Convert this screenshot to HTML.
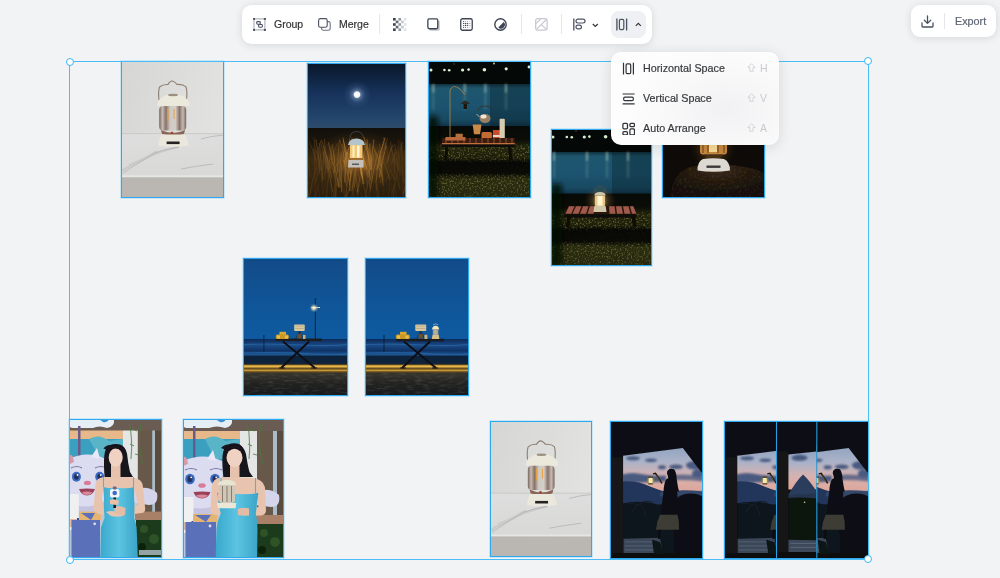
<!DOCTYPE html>
<html><head><meta charset="utf-8">
<style>
*{margin:0;padding:0;box-sizing:border-box}
html,body{width:1000px;height:578px;overflow:hidden;background:#f2f3f5;font-family:"Liberation Sans",sans-serif}
.abs{position:absolute}
.ph{position:absolute;overflow:hidden;outline:1px solid #2ea8ee;outline-offset:-1px;box-shadow:0 0 0 0.7px rgba(110,200,250,0.45)}
.ph svg{display:block;width:100%;height:100%}
#toolbar{left:242px;top:5px;width:410px;height:39px;background:#fff;border-radius:9.5px;box-shadow:0 1px 8px rgba(0,0,0,0.12)}
#export{left:911px;top:5px;width:85px;height:32px;background:#fff;border-radius:9px;box-shadow:0 1px 8px rgba(0,0,0,0.12)}
.t{position:absolute;font-size:10.5px;color:#333;line-height:12px;white-space:nowrap;will-change:transform;-webkit-text-stroke:0.2px currentColor}
.sep{position:absolute;width:1px;background:#e6e7ea}
#menu{left:611px;top:52px;width:168px;height:93px;background:radial-gradient(ellipse 60% 70% at 68% 62%,#f1f1f3 0%,#f8f8f9 55%,#fdfdfd 100%);border-radius:10px;box-shadow:0 2px 14px rgba(0,0,0,0.12)}
.mi{position:absolute;font-size:10.75px;color:#383a3e;line-height:12px;white-space:nowrap;will-change:transform;-webkit-text-stroke:0.2px currentColor}
.sc{position:absolute;font-size:10.5px;color:#c9cace;line-height:12px;will-change:transform}
.sel-line{position:absolute;background:#4cbcf8}
.handle{position:absolute;width:8px;height:8px;border-radius:50%;background:#fff;border:1.3px solid #3db6f6}
</style></head><body>

<!-- photos -->
<div class="ph" id="p1" style="left:121px;top:61px;width:103px;height:137px;background:#d6d6d4"><svg viewBox="0 0 103 137" preserveAspectRatio="none">
<defs>
<linearGradient id="w1" x1="0" y1="0" x2="1" y2="0.3"><stop offset="0" stop-color="#d6d6d4"/><stop offset="0.6" stop-color="#dddddb"/><stop offset="1" stop-color="#e2e2e0"/></linearGradient>
<linearGradient id="t1" x1="0" y1="0" x2="0" y2="1"><stop offset="0" stop-color="#dedede"/><stop offset="1" stop-color="#d8d8d6"/></linearGradient>
<linearGradient id="gl1" x1="0" y1="0" x2="1" y2="0"><stop offset="0" stop-color="#7a6458"/><stop offset="0.12" stop-color="#c4bcb6"/><stop offset="0.25" stop-color="#8a7266"/><stop offset="0.4" stop-color="#cfc9c4"/><stop offset="0.6" stop-color="#d4cec8"/><stop offset="0.75" stop-color="#8a7266"/><stop offset="0.88" stop-color="#c4bcb6"/><stop offset="1" stop-color="#7a6458"/></linearGradient>
<filter id="bl1" x="-5%" y="-5%" width="110%" height="110%"><feGaussianBlur stdDeviation="0.5"/></filter>
</defs>
<rect width="103" height="137" fill="url(#w1)"/>
<rect y="72.7" width="103" height="43" fill="url(#t1)"/>
<path d="M0 72.7 H103" stroke="#c4c4c2" stroke-width="0.8"/>
<g filter="url(#bl1)">
<path d="M0 110 Q18 100 34 93 Q44 89 58 86 M8 104 Q24 98 36 90" fill="none" stroke="#b0aeb0" stroke-width="2.2" opacity="0.35"/><path d="M2 112 Q20 100 34 92 Q44 88 58 86 M60 108 Q75 105 92 103 M80 78 Q90 75 103 74" fill="none" stroke="#a8a6a8" stroke-width="0.6"/>
<rect y="114.3" width="103" height="2" fill="#e6e6e4"/>
<rect y="116.3" width="103" height="21" fill="#bab7b2"/>
<path d="M38 39 Q37 31 38.5 26 Q42 23 47 23.5 Q49 20 51 20 Q53 20 56 23.5 Q62 23 65 25.8 Q66.5 31 65.5 39" fill="none" stroke="#8d7e72" stroke-width="1.1"/>
<path d="M36 45 Q37 34 52 33 Q68 34 69 45 Z" fill="#ebe9dc"/>
<ellipse cx="52" cy="34" rx="5" ry="1.2" fill="#9c8f80"/>
<rect x="38.2" y="45" width="27" height="24.5" rx="4" fill="url(#gl1)"/>
<path d="M47 48 V60 M53 48 V58" stroke="#e8a040" stroke-width="1"/>
<path d="M40 69 Q52 75 64 69 L63 73 Q52 76 41 73 Z" fill="#8a6658"/>
<circle cx="51" cy="72" r="1.5" fill="#a04a30"/>
<path d="M40 73.5 H64 Q67 80 68 84.5 Q52 87 37 84.5 Q38 79 40 73.5 Z" fill="#eae8dc"/>
<rect x="45.6" y="80.5" width="13" height="2.6" fill="#222"/>
</g>
</svg></div>
<div class="ph" id="p2" style="left:307px;top:63px;width:99px;height:135px;background:#1b2a3c"><svg viewBox="0 0 99 135" preserveAspectRatio="none">
<defs>
<linearGradient id="s2" x1="0" y1="0" x2="0" y2="1"><stop offset="0" stop-color="#091628"/><stop offset="0.45" stop-color="#16325a"/><stop offset="0.85" stop-color="#24466c"/><stop offset="1" stop-color="#2e4c6a"/></linearGradient>
<radialGradient id="m2"><stop offset="0" stop-color="#ffffff"/><stop offset="0.2" stop-color="#f0f4f8"/><stop offset="0.28" stop-color="#90a8c8" stop-opacity="0.55"/><stop offset="0.6" stop-color="#4a6a98" stop-opacity="0.25"/><stop offset="1" stop-color="#3a5a88" stop-opacity="0"/></radialGradient>
<linearGradient id="g2" x1="0" y1="0" x2="0" y2="1"><stop offset="0" stop-color="#12100c"/><stop offset="0.2" stop-color="#1a140c"/><stop offset="0.45" stop-color="#3a2a12"/><stop offset="1" stop-color="#2a1e0e"/></linearGradient>
<radialGradient id="gw2" cx="0.5" cy="0.5" r="0.5"><stop offset="0" stop-color="#d89040" stop-opacity="0.7"/><stop offset="0.5" stop-color="#8a5a20" stop-opacity="0.35"/><stop offset="1" stop-color="#4a3010" stop-opacity="0"/></radialGradient>
<filter id="bl2" x="-10%" y="-10%" width="120%" height="120%"><feGaussianBlur stdDeviation="0.45"/></filter>
</defs>
<rect width="99" height="65.5" fill="url(#s2)"/>
<circle cx="50" cy="31.6" r="14" fill="url(#m2)"/>
<rect y="65" width="99" height="70" fill="url(#g2)"/>
<ellipse cx="50" cy="98" rx="48" ry="32" fill="url(#gw2)"/>
<g fill="none" filter="url(#bl2)"><path d="M20.7 99.6 Q18.9 88.1 14.5 76.6" stroke="#724e1f" stroke-width="0.65" opacity="0.82"/><path d="M82.2 129.4 Q82.4 120.3 82.9 111.2" stroke="#483013" stroke-width="0.54" opacity="0.49"/><path d="M18.4 136.7 Q20.0 119.1 23.9 101.5" stroke="#5a3d18" stroke-width="0.55" opacity="0.57"/><path d="M63.3 127.9 Q65.4 110.0 70.2 92.0" stroke="#875d25" stroke-width="0.75" opacity="0.72"/><path d="M50.1 103.0 Q47.9 90.4 42.8 77.7" stroke="#d7963c" stroke-width="0.88" opacity="0.67"/><path d="M27.7 135.9 Q29.8 121.9 34.6 107.9" stroke="#5f411a" stroke-width="0.70" opacity="0.62"/><path d="M60.3 114.4 Q59.2 106.1 56.8 97.9" stroke="#b57e32" stroke-width="0.47" opacity="0.47"/><path d="M63.3 107.6 Q63.1 94.1 62.8 80.7" stroke="#b77f33" stroke-width="0.95" opacity="0.53"/><path d="M40.0 104.1 Q38.8 89.3 36.0 74.4" stroke="#b98133" stroke-width="0.82" opacity="0.58"/><path d="M55.9 135.7 Q53.5 128.3 48.0 120.9" stroke="#462f13" stroke-width="0.83" opacity="0.70"/><path d="M20.9 109.9 Q20.7 101.4 20.1 92.9" stroke="#724e1f" stroke-width="0.80" opacity="0.81"/><path d="M99.1 128.1 Q96.5 108.6 90.4 89.2" stroke="#483113" stroke-width="0.93" opacity="0.76"/><path d="M39.7 137.4 Q41.5 122.8 45.5 108.1" stroke="#593c18" stroke-width="0.55" opacity="0.63"/><path d="M9.9 112.2 Q9.0 93.1 6.8 74.1" stroke="#513615" stroke-width="0.53" opacity="0.76"/><path d="M34.5 108.1 Q37.1 100.7 43.2 93.3" stroke="#ac772f" stroke-width="0.55" opacity="0.47"/><path d="M1.0 102.6 Q-0.9 88.5 -5.3 74.3" stroke="#4f3615" stroke-width="0.57" opacity="0.85"/><path d="M8.3 118.8 Q7.8 102.0 6.7 85.1" stroke="#68471c" stroke-width="0.69" opacity="0.55"/><path d="M39.8 96.7 Q38.4 88.9 35.2 81.1" stroke="#c88b37" stroke-width="0.70" opacity="0.46"/><path d="M22.7 105.9 Q21.3 97.0 17.9 88.1" stroke="#996a2a" stroke-width="0.52" opacity="0.47"/><path d="M96.2 120.4 Q95.6 100.6 94.4 80.7" stroke="#5d4019" stroke-width="0.78" opacity="0.77"/><path d="M76.2 117.2 Q74.6 109.9 71.0 102.6" stroke="#845b24" stroke-width="0.90" opacity="0.82"/><path d="M31.7 124.6 Q32.5 107.4 34.3 90.2" stroke="#9e6e2c" stroke-width="0.71" opacity="0.71"/><path d="M69.8 107.1 Q72.2 90.8 78.0 74.6" stroke="#b47d32" stroke-width="0.93" opacity="0.72"/><path d="M-0.1 135.5 Q2.4 127.7 8.3 119.9" stroke="#553a17" stroke-width="0.48" opacity="0.52"/><path d="M64.2 120.6 Q66.5 104.2 71.9 87.7" stroke="#9f6e2c" stroke-width="0.45" opacity="0.82"/><path d="M-3.6 134.4 Q-1.9 126.8 2.0 119.2" stroke="#593d18" stroke-width="0.89" opacity="0.67"/><path d="M90.8 104.1 Q89.9 92.6 87.7 81.1" stroke="#67461c" stroke-width="0.69" opacity="0.66"/><path d="M-2.1 96.5 Q-2.2 88.7 -2.3 80.9" stroke="#533816" stroke-width="0.52" opacity="0.60"/><path d="M78.7 118.5 Q80.5 112.4 84.7 106.2" stroke="#745020" stroke-width="0.49" opacity="0.67"/><path d="M36.5 130.4 Q35.1 120.1 31.8 109.7" stroke="#68471c" stroke-width="0.93" opacity="0.49"/><path d="M7.5 122.9 Q7.5 104.5 7.7 86.2" stroke="#4f3515" stroke-width="0.88" opacity="0.76"/><path d="M2.3 134.7 Q1.2 125.9 -1.3 117.2" stroke="#5b3e18" stroke-width="0.66" opacity="0.77"/><path d="M13.2 134.3 Q11.4 125.9 6.9 117.4" stroke="#4f3615" stroke-width="0.62" opacity="0.67"/><path d="M93.5 127.0 Q92.5 120.9 90.2 114.8" stroke="#513716" stroke-width="0.69" opacity="0.74"/><path d="M47.8 98.4 Q49.7 89.0 54.0 79.5" stroke="#c88b37" stroke-width="0.83" opacity="0.84"/><path d="M63.3 125.5 Q62.3 110.9 59.9 96.4" stroke="#9f6e2c" stroke-width="0.68" opacity="0.81"/><path d="M28.3 134.0 Q28.9 117.0 30.3 100.0" stroke="#66461c" stroke-width="0.52" opacity="0.76"/><path d="M34.5 124.8 Q32.2 116.9 27.0 109.1" stroke="#68471c" stroke-width="0.85" opacity="0.52"/><path d="M93.3 111.7 Q92.5 97.7 90.6 83.6" stroke="#593c18" stroke-width="0.50" opacity="0.61"/><path d="M97.0 103.1 Q96.1 89.7 93.9 76.4" stroke="#3f2a11" stroke-width="0.46" opacity="0.83"/><path d="M85.4 131.0 Q87.9 113.7 93.6 96.4" stroke="#473013" stroke-width="0.74" opacity="0.65"/><path d="M57.6 137.2 Q60.1 120.6 66.0 103.9" stroke="#5f411a" stroke-width="0.78" opacity="0.72"/><path d="M76.2 122.8 Q75.2 105.2 72.7 87.5" stroke="#926528" stroke-width="0.65" opacity="0.69"/><path d="M92.8 126.7 Q91.3 116.3 87.9 106.0" stroke="#4a3214" stroke-width="0.76" opacity="0.85"/><path d="M93.0 113.0 Q94.7 101.4 98.7 89.8" stroke="#4c3314" stroke-width="0.66" opacity="0.46"/><path d="M15.0 119.3 Q15.7 103.6 17.1 87.9" stroke="#67461c" stroke-width="0.93" opacity="0.70"/><path d="M12.0 98.0 Q14.6 89.7 20.8 81.4" stroke="#69481c" stroke-width="0.61" opacity="0.49"/><path d="M23.1 105.0 Q25.2 92.6 30.2 80.2" stroke="#815923" stroke-width="0.57" opacity="0.57"/><path d="M98.3 102.3 Q99.3 90.4 101.6 78.4" stroke="#5f411a" stroke-width="0.58" opacity="0.66"/><path d="M12.2 99.4 Q11.2 92.9 8.9 86.5" stroke="#5b3e18" stroke-width="0.48" opacity="0.85"/><path d="M26.5 135.1 Q27.8 119.2 30.7 103.4" stroke="#61421a" stroke-width="0.93" opacity="0.80"/><path d="M73.4 120.2 Q74.6 104.5 77.4 88.8" stroke="#906327" stroke-width="0.70" opacity="0.51"/><path d="M87.0 116.8 Q85.2 109.8 81.1 102.9" stroke="#65451b" stroke-width="0.58" opacity="0.61"/><path d="M69.4 133.8 Q68.7 123.2 67.3 112.6" stroke="#503615" stroke-width="0.46" opacity="0.80"/><path d="M-2.9 138.2 Q-4.8 130.1 -9.1 121.9" stroke="#5c3e19" stroke-width="0.86" opacity="0.54"/><path d="M55.3 116.5 Q53.6 100.4 49.7 84.3" stroke="#d6953b" stroke-width="0.95" opacity="0.73"/><path d="M95.4 137.2 Q97.3 125.9 101.7 114.5" stroke="#5b3e18" stroke-width="0.74" opacity="0.49"/><path d="M62.5 136.0 Q63.3 125.8 65.1 115.5" stroke="#5d3f19" stroke-width="0.75" opacity="0.46"/><path d="M63.9 106.5 Q64.8 91.5 66.8 76.5" stroke="#c58937" stroke-width="0.76" opacity="0.59"/><path d="M85.9 135.1 Q88.0 116.6 92.8 98.1" stroke="#553a17" stroke-width="0.80" opacity="0.69"/><path d="M52.5 139.4 Q50.2 128.5 44.9 117.5" stroke="#573b17" stroke-width="0.70" opacity="0.67"/><path d="M60.2 106.2 Q57.9 97.4 52.5 88.6" stroke="#cf9039" stroke-width="0.90" opacity="0.73"/><path d="M7.7 139.0 Q7.8 121.5 7.9 103.9" stroke="#3f2a10" stroke-width="0.87" opacity="0.70"/><path d="M62.8 95.8 Q60.3 86.8 54.4 77.8" stroke="#a3712d" stroke-width="0.63" opacity="0.81"/><path d="M76.6 131.7 Q76.0 121.5 74.6 111.4" stroke="#533816" stroke-width="0.47" opacity="0.61"/><path d="M101.3 128.9 Q100.2 110.9 97.6 92.8" stroke="#563a17" stroke-width="0.84" opacity="0.73"/><path d="M42.7 102.9 Q44.8 96.6 49.6 90.4" stroke="#d7963c" stroke-width="0.59" opacity="0.75"/><path d="M39.4 123.2 Q38.4 105.5 36.2 87.7" stroke="#b07a31" stroke-width="0.58" opacity="0.65"/><path d="M-1.7 106.9 Q0.5 96.8 5.7 86.8" stroke="#432d12" stroke-width="0.83" opacity="0.48"/><path d="M102.5 102.5 Q101.0 95.2 97.3 87.9" stroke="#5e4019" stroke-width="0.78" opacity="0.81"/><path d="M49.4 100.1 Q49.2 89.4 48.6 78.6" stroke="#d7963c" stroke-width="0.53" opacity="0.55"/><path d="M86.9 100.1 Q85.8 89.3 83.3 78.5" stroke="#6e4b1e" stroke-width="0.90" opacity="0.48"/><path d="M87.3 103.1 Q84.7 91.6 78.8 80.1" stroke="#5e4019" stroke-width="0.55" opacity="0.46"/><path d="M30.4 109.8 Q30.9 93.3 32.3 76.9" stroke="#b77f33" stroke-width="0.54" opacity="0.54"/><path d="M99.2 137.8 Q101.8 122.2 107.8 106.7" stroke="#412b11" stroke-width="0.90" opacity="0.73"/><path d="M67.8 132.9 Q66.2 125.5 62.4 118.0" stroke="#432d12" stroke-width="0.69" opacity="0.67"/><path d="M53.9 111.3 Q55.8 94.9 60.0 78.5" stroke="#d7963c" stroke-width="0.47" opacity="0.51"/><path d="M18.9 105.7 Q17.2 91.7 13.4 77.7" stroke="#835a24" stroke-width="0.62" opacity="0.60"/><path d="M72.2 137.5 Q71.4 128.8 69.4 120.2" stroke="#60411a" stroke-width="0.56" opacity="0.46"/><path d="M15.8 132.1 Q18.2 115.9 23.7 99.7" stroke="#503615" stroke-width="0.47" opacity="0.57"/><path d="M73.4 112.7 Q72.7 104.7 71.2 96.8" stroke="#8c6126" stroke-width="0.63" opacity="0.63"/><path d="M9.9 96.3 Q11.1 86.8 14.0 77.3" stroke="#4e3415" stroke-width="0.60" opacity="0.67"/><path d="M92.5 116.7 Q92.7 97.0 93.0 77.4" stroke="#4d3414" stroke-width="0.76" opacity="0.69"/><path d="M60.3 127.6 Q60.0 121.3 59.2 115.0" stroke="#714d1f" stroke-width="0.52" opacity="0.47"/><path d="M14.9 107.9 Q13.9 95.8 11.6 83.7" stroke="#765120" stroke-width="0.54" opacity="0.59"/><path d="M68.7 119.5 Q71.0 100.1 76.5 80.7" stroke="#9e6d2b" stroke-width="0.62" opacity="0.67"/><path d="M54.3 111.5 Q52.7 93.4 48.8 75.3" stroke="#d7963c" stroke-width="0.51" opacity="0.80"/><path d="M59.9 139.4 Q61.1 131.4 63.7 123.4" stroke="#533816" stroke-width="0.48" opacity="0.78"/><path d="M90.3 98.6 Q91.8 88.7 95.4 78.8" stroke="#5e4019" stroke-width="0.58" opacity="0.47"/><path d="M46.8 134.0 Q46.7 125.0 46.3 116.1" stroke="#513716" stroke-width="0.80" opacity="0.83"/><path d="M91.8 108.0 Q89.1 96.1 82.8 84.3" stroke="#5c3e19" stroke-width="0.88" opacity="0.79"/><path d="M2.9 114.5 Q2.4 107.4 1.5 100.3" stroke="#5e4019" stroke-width="0.59" opacity="0.79"/><path d="M99.1 131.8 Q101.4 123.0 106.7 114.2" stroke="#5e4019" stroke-width="0.95" opacity="0.45"/><path d="M-4.6 108.1 Q-5.0 94.9 -6.0 81.6" stroke="#422c11" stroke-width="0.77" opacity="0.72"/><path d="M63.7 118.0 Q64.7 104.3 67.1 90.6" stroke="#9b6b2a" stroke-width="0.67" opacity="0.50"/><path d="M6.3 129.3 Q5.5 118.7 3.4 108.2" stroke="#483013" stroke-width="0.74" opacity="0.50"/><path d="M64.9 98.2 Q63.0 89.2 58.7 80.1" stroke="#b27b31" stroke-width="0.66" opacity="0.57"/><path d="M34.2 129.1 Q34.4 115.8 34.8 102.5" stroke="#6f4c1e" stroke-width="0.76" opacity="0.52"/><path d="M47.6 124.3 Q48.0 110.7 49.0 97.1" stroke="#a16f2c" stroke-width="0.55" opacity="0.83"/><path d="M69.5 127.7 Q69.3 108.3 68.7 88.9" stroke="#885e25" stroke-width="0.60" opacity="0.58"/><path d="M27.7 109.2 Q27.6 100.3 27.4 91.4" stroke="#936528" stroke-width="0.63" opacity="0.72"/><path d="M29.4 133.9 Q28.4 116.7 26.3 99.5" stroke="#775220" stroke-width="0.54" opacity="0.49"/><path d="M103.4 96.5 Q105.4 90.4 110.0 84.3" stroke="#3f2a10" stroke-width="0.78" opacity="0.67"/><path d="M19.3 106.0 Q18.7 91.0 17.4 75.9" stroke="#7d5622" stroke-width="0.82" opacity="0.57"/><path d="M4.7 130.6 Q2.3 123.2 -3.3 115.9" stroke="#3f2a10" stroke-width="0.95" opacity="0.62"/><path d="M75.4 120.1 Q74.5 100.4 72.5 80.8" stroke="#8a5f26" stroke-width="0.79" opacity="0.45"/><path d="M34.6 129.2 Q34.6 115.1 34.5 101.1" stroke="#8b6026" stroke-width="0.67" opacity="0.74"/><path d="M37.8 98.9 Q36.2 87.5 32.6 76.0" stroke="#a3712d" stroke-width="0.59" opacity="0.50"/><path d="M44.8 128.2 Q46.8 111.6 51.7 95.0" stroke="#926528" stroke-width="0.78" opacity="0.81"/><path d="M38.2 136.1 Q40.4 128.7 45.7 121.2" stroke="#5d3f19" stroke-width="0.94" opacity="0.78"/><path d="M72.5 114.6 Q74.5 98.5 79.3 82.5" stroke="#9e6d2b" stroke-width="0.76" opacity="0.82"/><path d="M26.0 110.1 Q28.1 103.6 32.8 97.1" stroke="#936528" stroke-width="0.79" opacity="0.55"/><path d="M15.1 116.5 Q14.3 98.3 12.5 80.0" stroke="#6f4c1e" stroke-width="0.66" opacity="0.79"/><path d="M8.5 134.0 Q9.6 127.8 12.1 121.6" stroke="#593c18" stroke-width="0.68" opacity="0.75"/><path d="M25.6 101.3 Q24.3 90.3 21.3 79.3" stroke="#9b6b2b" stroke-width="0.73" opacity="0.71"/><path d="M101.4 129.8 Q103.9 112.7 109.8 95.6" stroke="#5e4019" stroke-width="0.82" opacity="0.59"/><path d="M50.4 129.0 Q52.6 112.0 57.6 95.0" stroke="#a16f2c" stroke-width="0.78" opacity="0.55"/><path d="M62.8 103.4 Q61.0 88.8 56.9 74.1" stroke="#c58937" stroke-width="0.88" opacity="0.57"/><path d="M-0.1 131.8 Q-2.0 115.0 -6.3 98.2" stroke="#5a3d18" stroke-width="0.87" opacity="0.68"/><path d="M24.9 97.5 Q24.5 90.7 23.8 83.8" stroke="#996a2a" stroke-width="0.77" opacity="0.54"/><path d="M82.0 97.8 Q80.2 85.9 76.1 74.0" stroke="#6a481d" stroke-width="0.85" opacity="0.54"/><path d="M-3.5 116.7 Q-3.1 105.8 -2.1 94.9" stroke="#523816" stroke-width="0.80" opacity="0.82"/><path d="M31.9 123.6 Q30.5 115.9 27.4 108.3" stroke="#66461c" stroke-width="0.88" opacity="0.59"/><path d="M72.5 134.5 Q70.9 123.1 67.2 111.7" stroke="#473013" stroke-width="0.69" opacity="0.60"/><path d="M2.6 133.3 Q4.6 118.3 9.3 103.4" stroke="#5b3e19" stroke-width="0.81" opacity="0.78"/><path d="M71.7 114.3 Q74.0 96.8 79.2 79.3" stroke="#926528" stroke-width="0.52" opacity="0.52"/><path d="M44.7 133.9 Q46.6 120.5 51.1 107.1" stroke="#69481c" stroke-width="0.73" opacity="0.55"/><path d="M64.8 107.2 Q64.2 101.1 62.9 94.9" stroke="#b27c31" stroke-width="0.89" opacity="0.56"/><path d="M96.0 131.5 Q97.5 123.3 101.0 115.1" stroke="#5e4019" stroke-width="0.93" opacity="0.73"/><path d="M37.6 119.5 Q38.2 104.4 39.6 89.2" stroke="#a2702c" stroke-width="0.89" opacity="0.67"/><path d="M2.8 108.8 Q2.6 101.7 2.1 94.5" stroke="#422c11" stroke-width="0.71" opacity="0.56"/><path d="M85.2 129.6 Q86.8 121.0 90.8 112.3" stroke="#523816" stroke-width="0.58" opacity="0.81"/><path d="M-4.3 113.0 Q-6.1 98.6 -10.4 84.2" stroke="#4f3615" stroke-width="0.89" opacity="0.59"/><path d="M72.2 103.6 Q74.7 89.4 80.6 75.3" stroke="#a2712d" stroke-width="0.62" opacity="0.46"/><path d="M18.0 127.8 Q18.2 115.3 18.5 102.8" stroke="#4a3214" stroke-width="0.54" opacity="0.60"/><path d="M51.0 131.9 Q50.1 119.6 47.9 107.3" stroke="#815923" stroke-width="0.80" opacity="0.75"/><path d="M82.8 116.8 Q80.7 107.2 75.8 97.5" stroke="#714d1f" stroke-width="0.82" opacity="0.81"/><path d="M95.2 117.7 Q97.7 104.8 103.6 92.0" stroke="#422c11" stroke-width="0.64" opacity="0.67"/><path d="M60.6 122.5 Q60.6 114.3 60.7 106.1" stroke="#7b5522" stroke-width="0.64" opacity="0.52"/><path d="M29.9 123.2 Q28.1 111.6 23.9 100.0" stroke="#7f5823" stroke-width="0.78" opacity="0.57"/><path d="M24.6 114.6 Q22.1 98.9 16.3 83.1" stroke="#97692a" stroke-width="0.48" opacity="0.81"/><path d="M15.8 132.1 Q15.8 125.6 15.7 119.1" stroke="#473013" stroke-width="0.84" opacity="0.76"/><path d="M8.8 97.3 Q8.4 87.2 7.4 77.0" stroke="#533816" stroke-width="0.63" opacity="0.68"/><path d="M37.3 100.8 Q40.0 88.2 46.1 75.6" stroke="#bd8334" stroke-width="0.81" opacity="0.82"/><path d="M43.5 111.3 Q41.3 94.2 36.3 77.1" stroke="#d7963c" stroke-width="0.52" opacity="0.70"/><path d="M51.0 129.7 Q51.9 122.9 54.1 116.0" stroke="#6f4c1e" stroke-width="0.47" opacity="0.72"/><path d="M25.5 128.5 Q22.8 108.8 16.6 89.1" stroke="#7c5522" stroke-width="0.70" opacity="0.84"/><path d="M95.7 96.3 Q95.2 88.4 94.1 80.5" stroke="#5a3d18" stroke-width="0.84" opacity="0.67"/><path d="M95.4 131.9 Q96.2 113.6 97.8 95.3" stroke="#473013" stroke-width="0.82" opacity="0.74"/><path d="M96.1 102.7 Q95.3 96.4 93.3 90.1" stroke="#473013" stroke-width="0.64" opacity="0.47"/><path d="M61.5 114.2 Q59.4 104.5 54.4 94.8" stroke="#b07a31" stroke-width="0.50" opacity="0.79"/><path d="M25.2 135.4 Q24.6 127.7 23.2 119.9" stroke="#593d18" stroke-width="0.71" opacity="0.63"/><path d="M91.0 102.4 Q91.1 89.3 91.3 76.3" stroke="#563a17" stroke-width="0.59" opacity="0.70"/><path d="M43.0 118.3 Q45.0 103.2 49.5 88.1" stroke="#c38836" stroke-width="0.60" opacity="0.72"/><path d="M70.5 135.9 Q70.6 124.5 71.0 113.1" stroke="#583c18" stroke-width="0.62" opacity="0.58"/><path d="M62.7 111.8 Q61.9 93.9 59.9 76.1" stroke="#b57e32" stroke-width="0.75" opacity="0.69"/><path d="M102.9 137.4 Q102.7 125.5 102.0 113.6" stroke="#553917" stroke-width="0.70" opacity="0.69"/><path d="M38.7 133.7 Q40.3 115.2 44.0 96.7" stroke="#8a5f26" stroke-width="0.89" opacity="0.55"/><path d="M97.7 104.1 Q97.6 96.7 97.6 89.2" stroke="#442e12" stroke-width="0.58" opacity="0.69"/><path d="M11.2 112.9 Q13.6 101.8 19.2 90.6" stroke="#533816" stroke-width="0.70" opacity="0.64"/><path d="M12.7 110.6 Q11.9 99.5 10.1 88.4" stroke="#6a491d" stroke-width="0.73" opacity="0.64"/><path d="M43.0 122.4 Q41.0 109.6 36.3 96.8" stroke="#a5722d" stroke-width="0.65" opacity="0.79"/><path d="M9.4 119.6 Q10.1 109.4 11.8 99.2" stroke="#5a3d18" stroke-width="0.77" opacity="0.68"/><path d="M96.5 105.2 Q96.2 92.1 95.4 79.1" stroke="#432d12" stroke-width="0.47" opacity="0.51"/><path d="M54.2 105.8 Q52.3 92.6 48.0 79.3" stroke="#d7963c" stroke-width="0.80" opacity="0.82"/><path d="M84.8 133.6 Q84.8 127.0 85.0 120.5" stroke="#493113" stroke-width="0.67" opacity="0.74"/><path d="M74.7 104.2 Q72.4 95.8 66.9 87.4" stroke="#9e6d2b" stroke-width="0.86" opacity="0.49"/><path d="M9.9 101.2 Q7.6 89.9 2.2 78.6" stroke="#6b491d" stroke-width="0.54" opacity="0.72"/><path d="M32.0 123.9 Q30.1 111.3 25.7 98.7" stroke="#946629" stroke-width="0.70" opacity="0.84"/><path d="M59.9 138.2 Q57.5 123.0 51.9 107.8" stroke="#4e3515" stroke-width="0.95" opacity="0.72"/><path d="M81.3 132.7 Q82.4 121.7 85.0 110.6" stroke="#553917" stroke-width="0.48" opacity="0.67"/><path d="M96.4 120.0 Q94.0 103.0 88.6 86.0" stroke="#4d3414" stroke-width="0.70" opacity="0.67"/><path d="M87.2 117.1 Q87.3 103.1 87.6 89.2" stroke="#6a491d" stroke-width="0.74" opacity="0.61"/><path d="M26.1 133.9 Q27.3 122.9 30.0 111.9" stroke="#483013" stroke-width="0.94" opacity="0.54"/><path d="M40.8 111.6 Q42.0 93.3 44.9 75.0" stroke="#c28736" stroke-width="0.57" opacity="0.75"/><path d="M43.7 103.1 Q44.9 95.5 47.7 87.8" stroke="#d7963c" stroke-width="0.85" opacity="0.48"/><path d="M47.4 101.5 Q45.9 88.7 42.5 75.8" stroke="#cd8f39" stroke-width="0.53" opacity="0.77"/><path d="M13.2 107.0 Q11.9 91.7 8.9 76.4" stroke="#745020" stroke-width="0.73" opacity="0.77"/><path d="M89.7 138.3 Q89.1 131.1 87.8 123.9" stroke="#4e3515" stroke-width="0.59" opacity="0.80"/><path d="M38.0 136.7 Q37.7 129.8 37.0 122.8" stroke="#543916" stroke-width="0.84" opacity="0.64"/><path d="M93.0 108.4 Q91.4 97.4 87.5 86.4" stroke="#4b3314" stroke-width="0.69" opacity="0.74"/><path d="M16.0 117.0 Q18.6 104.9 24.7 92.8" stroke="#6c4a1d" stroke-width="0.85" opacity="0.54"/><path d="M92.5 96.1 Q93.3 87.9 95.0 79.8" stroke="#553a17" stroke-width="0.71" opacity="0.70"/><path d="M32.9 124.8 Q33.4 113.2 34.4 101.7" stroke="#885e25" stroke-width="0.60" opacity="0.75"/><path d="M84.9 139.5 Q84.5 132.6 83.6 125.7" stroke="#442e12" stroke-width="0.53" opacity="0.64"/><path d="M79.8 100.6 Q81.7 91.2 86.0 81.7" stroke="#8b6026" stroke-width="0.55" opacity="0.74"/><path d="M57.6 107.3 Q56.7 94.0 54.6 80.7" stroke="#d7963c" stroke-width="0.65" opacity="0.50"/><path d="M83.9 102.1 Q86.0 94.4 90.7 86.7" stroke="#6d4a1d" stroke-width="0.58" opacity="0.61"/><path d="M73.8 103.8 Q71.5 93.3 66.0 82.9" stroke="#906327" stroke-width="0.82" opacity="0.71"/><path d="M60.4 135.4 Q59.2 129.0 56.4 122.6" stroke="#543917" stroke-width="0.63" opacity="0.84"/><path d="M19.4 138.2 Q20.3 121.9 22.5 105.7" stroke="#5f4019" stroke-width="0.67" opacity="0.58"/><path d="M42.6 128.1 Q43.3 110.6 44.9 93.1" stroke="#a5722d" stroke-width="0.78" opacity="0.76"/><path d="M9.0 132.3 Q8.0 118.9 5.9 105.4" stroke="#432d12" stroke-width="0.75" opacity="0.54"/><path d="M34.4 119.6 Q33.0 110.7 29.6 101.7" stroke="#7f5823" stroke-width="0.62" opacity="0.78"/><path d="M21.6 107.0 Q22.2 99.1 23.5 91.2" stroke="#8f6327" stroke-width="0.54" opacity="0.78"/><path d="M-3.9 100.3 Q-2.3 92.9 1.3 85.6" stroke="#412c11" stroke-width="0.82" opacity="0.53"/><path d="M27.5 99.5 Q26.8 90.5 25.2 81.4" stroke="#a16f2c" stroke-width="0.73" opacity="0.63"/><path d="M56.3 121.1 Q54.8 101.5 51.3 82.0" stroke="#b98133" stroke-width="0.95" opacity="0.73"/><path d="M63.8 116.1 Q62.4 109.9 58.9 103.7" stroke="#9e6e2c" stroke-width="0.59" opacity="0.69"/><path d="M48.2 102.8 Q45.9 96.0 40.4 89.2" stroke="#d7963c" stroke-width="0.57" opacity="0.65"/></g>
<g filter="url(#bl2)">
<path d="M43 75 Q43 69 49.5 68.5 Q56 69 56.5 75" fill="none" stroke="#4a5060" stroke-width="0.7"/>
<path d="M41 82 Q42 75.5 49.5 75.5 Q57 75.5 58 82 Z" fill="#b4c4cc"/>
<rect x="43" y="82" width="12.4" height="13" fill="#f2c878"/>
<rect x="45.5" y="82.5" width="2" height="12" fill="#fff0c0"/><rect x="50" y="82.5" width="2.5" height="12" fill="#fff6d8"/>
<path d="M43 95 H55.4 L54 97 H44 Z" fill="#a07030"/>
<path d="M41.5 97 H56.5 L56.7 104.5 H41 Z" fill="#c4c0bc"/>
<rect x="45" y="100.5" width="7" height="1.5" fill="#5a5a5a"/>
</g>
</svg></div>
<div class="ph" id="p3" style="left:428px;top:61px;width:103px;height:137px;background:#0e1a1c"><svg viewBox="0 0 103 137" preserveAspectRatio="none">
<defs>
<linearGradient id="l3" x1="0" y1="0" x2="0" y2="1"><stop offset="0" stop-color="#10303e"/><stop offset="0.1" stop-color="#1e566e"/><stop offset="0.5" stop-color="#1c5470"/><stop offset="0.85" stop-color="#184a62"/><stop offset="1" stop-color="#10344a"/></linearGradient>
<linearGradient id="gr3" x1="0" y1="0" x2="0" y2="1"><stop offset="0" stop-color="#080a07"/><stop offset="0.18" stop-color="#0a0c07"/><stop offset="0.3" stop-color="#22240c"/><stop offset="0.45" stop-color="#1c1e0a"/><stop offset="0.5" stop-color="#070705"/><stop offset="0.66" stop-color="#0a0a06"/><stop offset="0.74" stop-color="#2a2c10"/><stop offset="1" stop-color="#24260e"/></linearGradient>
<filter id="bl3" x="-10%" y="-10%" width="120%" height="120%"><feGaussianBlur stdDeviation="0.5"/></filter>
<filter id="bb3" x="-50%" y="-20%" width="200%" height="140%"><feGaussianBlur stdDeviation="2.5"/></filter>
<filter id="sp3" x="0" y="0" width="100%" height="100%"><feTurbulence type="fractalNoise" baseFrequency="0.55" numOctaves="2" seed="3"/><feColorMatrix values="0 0 0 0 0.45  0 0 0 0 0.42  0 0 0 0 0.12  0 0 0 3.5 -1.75"/><feComposite in2="SourceGraphic" operator="in"/></filter>
<linearGradient id="mg3" x1="0" y1="80" x2="0" y2="137" gradientUnits="userSpaceOnUse"><stop offset="0" stop-color="#000"/><stop offset="0.12" stop-color="#fff"/><stop offset="0.3" stop-color="#fff"/><stop offset="0.38" stop-color="#222"/><stop offset="0.55" stop-color="#111"/><stop offset="0.64" stop-color="#fff"/><stop offset="0.85" stop-color="#ddd"/><stop offset="1" stop-color="#999"/></linearGradient></defs>
<rect width="103" height="137" fill="#040806"/>
<rect y="23" width="103" height="42" fill="url(#l3)"/><rect x="62" y="23" width="41" height="42" fill="#081c24" opacity="0.35"/>
<filter id="rf3" x="-100%" y="-20%" width="300%" height="140%"><feGaussianBlur stdDeviation="0.9"/></filter><g filter="url(#rf3)" fill="#c8dcc8"><rect x="4.3" y="23" width="2" height="9" opacity="0.55"/><rect x="4.3" y="33" width="2" height="16" opacity="0.18"/><rect x="35.8" y="23" width="2" height="9" opacity="0.55"/><rect x="35.8" y="33" width="2" height="16" opacity="0.18"/><rect x="56.4" y="23" width="2" height="9" opacity="0.55"/><rect x="56.4" y="33" width="2" height="16" opacity="0.18"/><rect x="77" y="23" width="2" height="9" opacity="0.55"/><rect x="77" y="33" width="2" height="16" opacity="0.18"/></g>
<g fill="#d8f0d0" filter="url(#bl3)">
<circle cx="3" cy="9" r="1.5"/><circle cx="16.4" cy="9" r="1.3"/><circle cx="21.2" cy="9.2" r="1.3"/><circle cx="34.6" cy="9" r="1.6"/><circle cx="40.6" cy="8.6" r="1.3"/><circle cx="56.4" cy="8.8" r="1.8"/><circle cx="78.2" cy="7.8" r="1.6"/><circle cx="101" cy="6" r="1.4"/>
<circle cx="26" cy="3" r="0.8" fill="#803030"/><circle cx="66" cy="2.5" r="1" fill="#c8c090"/>
</g>
<rect y="65" width="103" height="72" fill="url(#gr3)"/>
<mask id="mk3" maskUnits="userSpaceOnUse" x="0" y="80" width="103" height="57"><rect y="80" width="103" height="57" fill="url(#mg3)"/></mask><g mask="url(#mk3)"><rect y="80" width="103" height="57" fill="#fff" filter="url(#sp3)" opacity="0.45"/></g>
<g filter="url(#bl3)">
<path d="M22 77 V30 Q24 22 32 28 L37 34" fill="none" stroke="#a08048" stroke-width="0.9"/>
<path d="M32.7 43 Q37 36 42 43 Z" fill="#2a2a28"/><rect x="35.5" y="43" width="3.5" height="5" fill="#1a1410"/>
<path d="M50 50 Q50 45 57 45 Q64 45 64 50" fill="none" stroke="#3a3020" stroke-width="0.8"/>
<ellipse cx="57" cy="57.5" rx="5.5" ry="4.5" fill="#9a8064"/><ellipse cx="55.5" cy="55.5" rx="3" ry="2" fill="#f0e8d8"/><path d="M51.5 56 L48.5 53" stroke="#c8b090" stroke-width="1"/>
<path d="M44.7 63.4 H53.5 L52 73.2 H46 Z" fill="#c88a48"/>
<rect x="53.5" y="71" width="10.4" height="10.5" rx="1.5" fill="#c46a30"/>
<rect x="64.9" y="69" width="8.3" height="11.5" fill="#c84c2a"/><rect x="64.9" y="74" width="8.3" height="2" fill="#e8d8c8"/>
<rect x="71.6" y="57.7" width="5.2" height="22.8" rx="1" fill="#d8ccb0"/>
<rect x="27.6" y="72.7" width="7.2" height="3.7" fill="#b07040"/>
<rect x="14" y="77" width="72.7" height="6.5" fill="#3a1c10"/>
<path d="M18 77 V83.5 M24 77 V83.5 M30 77 V83.5 M36 77 V83.5 M42 77 V83.5 M48 77 V83.5 M54 77 V83.5 M60 77 V83.5 M66 77 V83.5 M72 77 V83.5 M78 77 V83.5 M84 77 V83.5" stroke="#9a5a38" stroke-width="1.1" opacity="0.8"/>
<rect x="14" y="82" width="72.7" height="1.5" fill="#c0703c"/>
<rect x="17.5" y="76" width="20" height="3.5" fill="#b8683a"/>
<rect x="14" y="83.5" width="72.7" height="2.5" fill="#100c08"/>
<path d="M19 86 L17.5 99 M81.5 86 L83 99" stroke="#0a0806" stroke-width="3"/>
</g>
<rect x="0" y="55" width="10" height="82" fill="#050705" filter="url(#bb3)" opacity="0.8"/>
</svg></div>
<div class="ph" id="p4" style="left:551px;top:129px;width:101px;height:137px;background:#0e1a1c"><svg viewBox="0 0 101 137" preserveAspectRatio="none">
<defs>
<linearGradient id="l4" x1="0" y1="0" x2="0" y2="1"><stop offset="0" stop-color="#10303e"/><stop offset="0.1" stop-color="#1e566e"/><stop offset="0.5" stop-color="#1c5470"/><stop offset="0.85" stop-color="#184a62"/><stop offset="1" stop-color="#10344a"/></linearGradient>
<linearGradient id="gr4" x1="0" y1="0" x2="0" y2="1"><stop offset="0" stop-color="#080a07"/><stop offset="0.18" stop-color="#0a0c07"/><stop offset="0.3" stop-color="#22240c"/><stop offset="0.45" stop-color="#1c1e0a"/><stop offset="0.5" stop-color="#070705"/><stop offset="0.66" stop-color="#0a0a06"/><stop offset="0.74" stop-color="#2a2c10"/><stop offset="1" stop-color="#24260e"/></linearGradient>
<radialGradient id="gw4"><stop offset="0" stop-color="#ffe6a8" stop-opacity="0.7"/><stop offset="0.5" stop-color="#c89a50" stop-opacity="0.25"/><stop offset="1" stop-color="#604020" stop-opacity="0"/></radialGradient>
<filter id="bl4" x="-10%" y="-10%" width="120%" height="120%"><feGaussianBlur stdDeviation="0.5"/></filter>
<filter id="bb4" x="-50%" y="-20%" width="200%" height="140%"><feGaussianBlur stdDeviation="2.5"/></filter>
<filter id="sp4" x="0" y="0" width="100%" height="100%"><feTurbulence type="fractalNoise" baseFrequency="0.55" numOctaves="2" seed="7"/><feColorMatrix values="0 0 0 0 0.45  0 0 0 0 0.42  0 0 0 0 0.12  0 0 0 3.5 -1.75"/><feComposite in2="SourceGraphic" operator="in"/></filter>
<linearGradient id="mg4" x1="0" y1="80" x2="0" y2="137" gradientUnits="userSpaceOnUse"><stop offset="0" stop-color="#000"/><stop offset="0.12" stop-color="#fff"/><stop offset="0.3" stop-color="#fff"/><stop offset="0.38" stop-color="#222"/><stop offset="0.55" stop-color="#111"/><stop offset="0.64" stop-color="#fff"/><stop offset="0.85" stop-color="#ddd"/><stop offset="1" stop-color="#999"/></linearGradient></defs>
<rect width="101" height="137" fill="#040806"/>
<rect y="23" width="101" height="42" fill="url(#l4)"/><rect x="61" y="23" width="40" height="42" fill="#081c24" opacity="0.35"/>
<filter id="rf4" x="-100%" y="-20%" width="300%" height="140%"><feGaussianBlur stdDeviation="0.9"/></filter><g filter="url(#rf4)" fill="#c8dcc8"><rect x="2" y="23" width="2" height="9" opacity="0.55"/><rect x="2" y="33" width="2" height="16" opacity="0.18"/><rect x="35" y="23" width="2" height="9" opacity="0.55"/><rect x="35" y="33" width="2" height="16" opacity="0.18"/><rect x="55" y="23" width="2" height="9" opacity="0.55"/><rect x="55" y="33" width="2" height="16" opacity="0.18"/><rect x="76" y="23" width="2" height="9" opacity="0.55"/><rect x="76" y="33" width="2" height="16" opacity="0.18"/></g>
<g fill="#d8f0d0" filter="url(#bl4)">
<circle cx="2" cy="8" r="1.5"/><circle cx="15.8" cy="8" r="1.3"/><circle cx="20.8" cy="8.2" r="1.3"/><circle cx="33.3" cy="8" r="1.6"/><circle cx="38.4" cy="7.6" r="1.3"/><circle cx="54.6" cy="7.8" r="1.8"/>
<circle cx="25" cy="2" r="0.8" fill="#803030"/>
</g>
<rect y="64.5" width="101" height="72.5" fill="url(#gr4)"/>
<mask id="mk4" maskUnits="userSpaceOnUse" x="0" y="80" width="101" height="57"><rect y="80" width="101" height="57" fill="url(#mg4)"/></mask><g mask="url(#mk4)"><rect y="80" width="101" height="57" fill="#fff" filter="url(#sp4)" opacity="0.45"/></g>
<circle cx="49" cy="72" r="16" fill="url(#gw4)"/>
<g filter="url(#bl4)">
<path d="M17.5 77 H82.5 L85.8 85.2 H13.2 Z" fill="#2a1410"/>
<path d="M18 77.3 L23.5 77.3 L20.3 84.8 L14.3 84.8 Z M25 77.3 L30.5 77.3 L27.5 84.8 L21.5 84.8 Z M32 77.3 L37.5 77.3 L35 84.8 L29 84.8 Z M39 77.3 L44.5 77.3 L42.5 84.8 L36.5 84.8 Z M58 77.3 L63.5 77.3 L64.5 84.8 L58.5 84.8 Z M65 77.3 L70.5 77.3 L72 84.8 L66 84.8 Z M72 77.3 L77.5 77.3 L79.5 84.8 L73.5 84.8 Z M79 77.3 L82.3 77.3 L85.5 84.8 L81 84.8 Z" fill="#a05a4c"/>
<rect x="13.2" y="85.2" width="72.6" height="3.2" fill="#0c0a08"/>
<path d="M18.3 87 L16.5 98 M82 87 L84 98" stroke="#0a0806" stroke-width="3"/>
<path d="M43.8 64 Q44 57.5 49 57.2 Q54 57.5 54.3 64" fill="none" stroke="#5a5040" stroke-width="0.7"/>
<path d="M43.3 66.6 Q43.6 63 49 63 Q54.4 63 54.7 66.6 Z" fill="#cfc6ae"/>
<rect x="43.8" y="66.6" width="10.3" height="10.4" rx="1.2" fill="#e8c888"/>
<rect x="46.5" y="67" width="5" height="9.5" fill="#fff4d0"/>
<path d="M43.3 77 H54.7 L55.5 83 H42.5 Z" fill="#d0c8a8"/>
</g>
<rect x="0" y="55" width="11" height="82" fill="#050705" filter="url(#bb4)" opacity="0.8"/>
</svg></div>
<div class="ph" id="p5" style="left:662px;top:61px;width:103px;height:137px;background:#120d08"><svg viewBox="0 0 103 137" preserveAspectRatio="none">
<defs>
<radialGradient id="gw5" cx="0.5" cy="0.5"><stop offset="0" stop-color="#ffd890" stop-opacity="0.8"/><stop offset="0.4" stop-color="#a87030" stop-opacity="0.35"/><stop offset="1" stop-color="#301c08" stop-opacity="0"/></radialGradient>
<radialGradient id="rk5" cx="0.5" cy="0.2" r="0.7"><stop offset="0" stop-color="#3a2818"/><stop offset="0.5" stop-color="#22180e"/><stop offset="1" stop-color="#120e0a"/></radialGradient>
<filter id="bl5" x="-10%" y="-10%" width="120%" height="120%"><feGaussianBlur stdDeviation="0.6"/></filter>
<filter id="sp5" x="0" y="0" width="100%" height="100%"><feTurbulence type="fractalNoise" baseFrequency="0.4" numOctaves="2" seed="5"/><feColorMatrix values="0 0 0 0 0.6  0 0 0 0 0.4  0 0 0 0 0.2  0 0 0 2.5 -1.2"/><feComposite in2="SourceGraphic" operator="in"/></filter>
</defs>
<rect width="103" height="137" fill="#0f0b08"/>
<path d="M8 137 Q10 112 28 106 Q51 100 76 105 Q100 108 103 114 V137 Z" fill="url(#rk5)" filter="url(#bl5)"/>
<path d="M8 137 Q10 112 28 106 Q51 100 76 105 Q100 108 103 114 V137 Z" fill="#fff" filter="url(#sp5)" opacity="0.12"/>
<circle cx="51" cy="86" r="24" fill="url(#gw5)"/>
<g filter="url(#bl5)">
<rect x="38" y="66" width="27" height="27.5" rx="3" fill="#c88a40"/>
<path d="M41 68 V92 M46 68 V92 M56 68 V92 M62 68 V92" stroke="#7a4818" stroke-width="1.1"/>
<rect x="47" y="82" width="8" height="9" fill="#f8dc98"/>
<path d="M42 93.5 H61 L58 97.5 H45 Z" fill="#4a3018"/>
<path d="M35.6 109.5 Q35 101 41 98 Q51 96.5 62 98 Q68 101 68 109.5 Q51 112 35.6 109.5 Z" fill="#dcd8d2"/>
<rect x="44.5" y="104.5" width="14" height="2.4" fill="#3a3838"/>
</g>
</svg></div>
<div class="ph" id="p6" style="left:243px;top:258px;width:105px;height:138px;background:#1d4e86"><svg viewBox="0 0 105 138" preserveAspectRatio="none">
<defs>
<linearGradient id="s6" x1="0" y1="0" x2="0" y2="1"><stop offset="0" stop-color="#134a88"/><stop offset="0.6" stop-color="#0f5699"/><stop offset="1" stop-color="#0e5aa0"/></linearGradient>
<linearGradient id="se6" x1="0" y1="0" x2="0" y2="1"><stop offset="0" stop-color="#0c2a58"/><stop offset="0.25" stop-color="#1a4a84"/><stop offset="0.45" stop-color="#0f3366"/><stop offset="0.65" stop-color="#2060a0"/><stop offset="0.7" stop-color="#11325c"/><stop offset="1" stop-color="#0f2236"/></linearGradient>
<linearGradient id="sa6" x1="0" y1="0" x2="0" y2="1"><stop offset="0" stop-color="#3a3428"/><stop offset="0.35" stop-color="#34322c"/><stop offset="0.6" stop-color="#222220"/><stop offset="1" stop-color="#15181c"/></linearGradient>
<radialGradient id="lg6"><stop offset="0" stop-color="#ffffff"/><stop offset="0.3" stop-color="#fff0c0" stop-opacity="0.8"/><stop offset="1" stop-color="#2a5a90" stop-opacity="0"/></radialGradient>
<filter id="bl6" x="-10%" y="-10%" width="120%" height="120%"><feGaussianBlur stdDeviation="0.5"/></filter>
<filter id="sn6" x="0" y="0" width="100%" height="100%"><feTurbulence type="fractalNoise" baseFrequency="0.12 0.5" numOctaves="2" seed="6"/><feColorMatrix values="0 0 0 0 0.45  0 0 0 0 0.43  0 0 0 0 0.4  0 0 0 2.2 -1.0"/><feComposite in2="SourceGraphic" operator="in"/></filter></defs>
<rect width="105" height="82" fill="url(#s6)"/>
<rect y="81" width="105" height="26" fill="url(#se6)"/>
<rect y="106" width="105" height="32" fill="url(#sa6)"/><rect y="115" width="105" height="23" fill="#fff" filter="url(#sn6)" opacity="0.18"/>
<g filter="url(#bl6)">
<path d="M0 86.5 Q30 85.5 60 87 T105 86 M0 95 Q40 94 70 96 T105 95" stroke="#2a68a8" stroke-width="1.2" fill="none" opacity="0.7"/>
<rect y="97.5" width="105" height="8" fill="#10223a"/>
<rect y="106.5" width="105" height="8" fill="#6a5020"/>
<rect y="107.3" width="105" height="2.2" fill="#e8b848"/>
<rect y="111.6" width="105" height="1.6" fill="#c89838"/>
<path d="M20.9 77 V94" stroke="#0e2034" stroke-width="0.8"/>
<path d="M72.4 40 V81" stroke="#1a2a3a" stroke-width="1.2"/>
<path d="M68 49.5 H77" stroke="#e8e0c0" stroke-width="1"/>
<rect x="32.8" y="80.6" width="46" height="2.4" fill="#1a1a1e"/>
<path d="M40 83.5 L72 110 M66 83.5 L38 110" stroke="#101014" stroke-width="2"/>
<path d="M36 110 H42 M68 110 H74" stroke="#141418" stroke-width="1.2"/>
<rect x="51.2" y="66.5" width="10.5" height="6.5" rx="0.8" fill="#d8c8a0"/>
<path d="M52 68 H61 M52 70.5 H61" stroke="#a89870" stroke-width="0.5"/>
<path d="M56.5 73 L52.5 81 M56.5 73 L60.5 81 M56.5 73 V81" stroke="#2a2418" stroke-width="0.7"/>
<rect x="54.5" y="76" width="4" height="4.5" fill="#6a5030"/>
<rect x="60" y="77" width="2.5" height="4" fill="#c8b080"/>
<rect x="36.5" y="73.8" width="6.5" height="3.8" fill="#d8a830"/>
<rect x="32.8" y="76.5" width="13" height="4.5" rx="1.5" fill="#c89828"/>
<rect x="34" y="77.5" width="3" height="3" fill="#e8c048"/><rect x="42" y="77.5" width="3" height="3" fill="#e8c048"/>
</g>
<circle cx="71" cy="50" r="5" fill="url(#lg6)"/>
</svg></div>
<div class="ph" id="p7" style="left:365px;top:258px;width:104px;height:138px;background:#1d4e86"><svg viewBox="0 0 104 138" preserveAspectRatio="none">
<defs>
<linearGradient id="s7" x1="0" y1="0" x2="0" y2="1"><stop offset="0" stop-color="#134a88"/><stop offset="0.6" stop-color="#0f5699"/><stop offset="1" stop-color="#0e5aa0"/></linearGradient>
<linearGradient id="se7" x1="0" y1="0" x2="0" y2="1"><stop offset="0" stop-color="#0c2a58"/><stop offset="0.25" stop-color="#1a4a84"/><stop offset="0.45" stop-color="#0f3366"/><stop offset="0.65" stop-color="#2060a0"/><stop offset="0.7" stop-color="#11325c"/><stop offset="1" stop-color="#0f2236"/></linearGradient>
<linearGradient id="sa7" x1="0" y1="0" x2="0" y2="1"><stop offset="0" stop-color="#3a3428"/><stop offset="0.35" stop-color="#34322c"/><stop offset="0.6" stop-color="#222220"/><stop offset="1" stop-color="#15181c"/></linearGradient>
<filter id="bl7" x="-10%" y="-10%" width="120%" height="120%"><feGaussianBlur stdDeviation="0.5"/></filter>
<filter id="sn7" x="0" y="0" width="100%" height="100%"><feTurbulence type="fractalNoise" baseFrequency="0.12 0.5" numOctaves="2" seed="7"/><feColorMatrix values="0 0 0 0 0.45  0 0 0 0 0.43  0 0 0 0 0.4  0 0 0 2.2 -1.0"/><feComposite in2="SourceGraphic" operator="in"/></filter></defs>
<rect width="104" height="82" fill="url(#s7)"/>
<rect y="81" width="104" height="26" fill="url(#se7)"/>
<rect y="106" width="104" height="32" fill="url(#sa7)"/><rect y="115" width="104" height="23" fill="#fff" filter="url(#sn7)" opacity="0.18"/>
<g filter="url(#bl7)">
<path d="M0 86.5 Q30 85.5 60 87 T104 86 M0 95 Q40 94 70 96 T104 95" stroke="#2a68a8" stroke-width="1.2" fill="none" opacity="0.7"/>
<rect y="97.5" width="104" height="8" fill="#10223a"/>
<rect y="106.5" width="104" height="8" fill="#6a5020"/>
<rect y="107.3" width="104" height="2.2" fill="#e8b848"/>
<rect y="111.6" width="104" height="1.6" fill="#c89838"/>
<path d="M19 77 V94" stroke="#0e2034" stroke-width="0.8"/>
<rect x="31.5" y="80.8" width="47.5" height="2.4" fill="#1a1a1e"/>
<path d="M39 83.5 L71 110 M65 83.5 L37 110" stroke="#101014" stroke-width="2"/>
<path d="M35 110 H41 M67 110 H73" stroke="#141418" stroke-width="1.2"/>
<rect x="50.3" y="66.5" width="10.9" height="6.5" rx="0.8" fill="#d8c8a0"/>
<path d="M51 68 H60.5 M51 70.5 H60.5" stroke="#a89870" stroke-width="0.5"/>
<path d="M55.7 73 L51.7 81 M55.7 73 L59.7 81 M55.7 73 V81" stroke="#2a2418" stroke-width="0.7"/>
<rect x="53.7" y="76" width="4" height="4.5" fill="#6a5030"/>
<rect x="59.4" y="76.8" width="3" height="4.2" fill="#c8b080"/>
<rect x="35" y="73.8" width="6.5" height="3.8" fill="#d8a830"/>
<rect x="30.9" y="76.5" width="13.9" height="4.5" rx="1.5" fill="#c89828"/>
<rect x="32" y="77.5" width="3" height="3" fill="#e8c048"/><rect x="40.5" y="77.5" width="3" height="3" fill="#e8c048"/>
<path d="M68 67 Q70.6 64.5 73.2 67" fill="none" stroke="#c8d0d8" stroke-width="0.6"/>
<path d="M67 71.4 Q67.5 67.8 70.6 67.8 Q73.7 67.8 74.2 71.4 Z" fill="#f0e6c0"/>
<rect x="67.8" y="71.4" width="5.6" height="5.4" fill="#9a9080"/>
<path d="M69.2 71.4 V76.8 M70.6 71.4 V76.8 M72 71.4 V76.8" stroke="#e8e0c8" stroke-width="0.5"/>
<path d="M67.5 76.8 H73.7 L74.4 81 H66.8 Z" fill="#d8c088"/>
</g>
</svg></div>
<div class="ph" id="p8" style="left:69px;top:419px;width:93px;height:139px;background:#70a8c0"><svg viewBox="0 0 93 139" preserveAspectRatio="none">
<defs>
<filter id="bl8" x="-10%" y="-10%" width="120%" height="120%"><feGaussianBlur stdDeviation="0.7"/></filter>
<linearGradient id="dr8" x1="0" y1="0" x2="1" y2="0"><stop offset="0" stop-color="#3aa8cc"/><stop offset="0.5" stop-color="#5cc4e2"/><stop offset="1" stop-color="#3aa4c8"/></linearGradient>
</defs>
<rect width="93" height="139" fill="#b8c8d8"/>
<g filter="url(#bl8)">
<rect x="0" y="11" width="55" height="12" fill="#e6b88a"/>
<rect x="0" y="20" width="55" height="20" fill="#3aa0c0"/>
<path d="M20 20 Q30 14 40 22 L55 20 V38 H30 Z" fill="#5ab4c8"/>
<rect x="54" y="11" width="15" height="50" fill="#e4e6e6"/>
<rect x="68.8" y="0" width="14.7" height="139" fill="#685848"/>
<rect x="83.5" y="0" width="9.5" height="100" fill="#a8bccc"/>
<rect x="86" y="0" width="7" height="100" fill="#5a4a3c"/>
<rect x="0" y="1" width="93" height="10.5" fill="#6a5c52"/>
<path d="M0 0 H45 Q46 8 38 9 Q30 6 24 9 H4 Q0 9 0 5 Z" fill="#e6eef6"/>
<path d="M30 0 H40 Q38 4 34 3 Z" fill="#3a90d0"/>
<rect x="9" y="7" width="2.5" height="31" fill="#6a5a8a"/>
<path d="M60 2 Q64 20 62 40 M72 5 Q68 25 74 45 M64 10 l4 2 M61 25 l4 2 M66 35 l4 1" stroke="#4a7a42" stroke-width="1.1" fill="none" opacity="0.75"/>
<path d="M0 40 Q18 31 37 40 Q38 60 36 80 Q33 92 20 93 H0 Z" fill="#dcdcf0"/><path d="M0 84 Q18 92 36 82 L36 93 H0 Z" fill="#c4c4e0"/>
<path d="M22 38 L28 29 L31 40 Z" fill="#e8e8f6"/>
<path d="M0 36 Q4 34 5 43 L1 45 Z" fill="#d89aa8"/>
<ellipse cx="7.4" cy="57.7" rx="4.5" ry="5" fill="#3a6ac0"/><ellipse cx="7.4" cy="57.7" rx="2.4" ry="3" fill="#223060"/><circle cx="8.5" cy="56" r="0.9" fill="#fff"/>
<ellipse cx="30.7" cy="57.7" rx="4.5" ry="5" fill="#3a6ac0"/><ellipse cx="30.7" cy="57.7" rx="2.4" ry="3" fill="#223060"/><circle cx="31.8" cy="56" r="0.9" fill="#fff"/>
<path d="M2 49 Q8 46 13 49 M26 49 Q32 46 37 49" stroke="#7878a8" stroke-width="1.2" fill="none"/>
<ellipse cx="18.4" cy="63.9" rx="3.5" ry="2.2" fill="#d87a98"/>
<path d="M10 70 Q18 69 26 70 Q24 76 18 76.5 Q12 76 10 70 Z" fill="#9a4058"/><path d="M12.5 73.5 Q18 71.5 23.5 73.5 Q21 76 18 76 Q15 76 12.5 73.5 Z" fill="#d88898"/>
<rect x="0" y="75" width="9.8" height="36" fill="#f0f0f0"/>
<rect x="0" y="100" width="10" height="8" fill="#e0b8a0"/>
<rect x="8" y="99" width="3" height="8" fill="#2a50a0"/>
<rect x="10" y="92.6" width="22" height="8.5" fill="#e6b472"/>
<path d="M2.5 101 H31 V139 H2.5 Z" fill="#5a70b8"/>
<path d="M12 94 L22 101 L26 94 Z" fill="#5a70b8"/>
<circle cx="25.7" cy="104.8" r="1.4" fill="#dde"/>
<path d="M65 70 Q80 66 88 74 Q90 86 80 86 L66 84 Z" fill="#d4d4ea"/>
<rect x="66" y="92.6" width="27" height="8.5" fill="#a88068"/>
<rect x="67" y="101" width="26" height="38" fill="#1c3a1c"/>
<circle cx="75" cy="110" r="4" fill="#2e5228"/><circle cx="85" cy="120" r="5" fill="#2e5228"/><circle cx="73" cy="128" r="4" fill="#10240f"/>
<path d="M70 131 H92 V136 H70 Z" fill="#c8d0e0" opacity="0.7"/>
<path d="M35.6 58 Q34.5 45 35.3 37 Q36 28 41 26 Q46 24.5 51 25.5 Q56.5 27.5 58 34.5 Q59 45 61 53 L64 58 Z" fill="#16121a"/>
<path d="M34.4 29.5 Q37 26 41 26 L39 31 Z" fill="#16121a"/>
<rect x="42" y="45" width="9.5" height="13" fill="#e6c2ae"/>
<ellipse cx="46.7" cy="38.5" rx="7" ry="9.3" fill="#f0d2c2"/>
<path d="M40 31 Q46 27 54 32 L54 29 Q47 25 40 28 Z" fill="#16121a"/>
<path d="M26.4 66 Q27 58.5 35 58 H58 Q72.5 58.5 73.7 66 L76.2 90 Q76 94 72.5 94 L62 95.5 L52 96 L50 90 L61 88 L69 86 L66 72 H34 L33 78 Q34 88 37 94 Q33 97 30 95 Q25 93 24.6 90 Z" fill="#e8c4ae"/>
<path d="M34.4 68 Q40 70 50 69 Q60 70 65 68 L65 80 Q66 90 65 98.7 Q67 104 67.6 108.5 L68.8 139 H31.3 L32 108.5 Q33.5 104 35.6 98.7 Q34.5 90 35 80 Z" fill="url(#dr8)"/>
<path d="M34.5 68 V58 M64.5 68 V58" stroke="#4cb8da" stroke-width="1.1"/>
<path d="M37 93 Q44 90 52 95 L56 96 Q50 99 42 97 Z" fill="#e8c4ae"/>
<path d="M45.5 87.6 Q51 86 56.5 89 L56 96 Q50 96.5 45.5 94 Z" fill="#e4bca6"/>
<rect x="41" y="70" width="9.4" height="8.5" rx="2" fill="#f4f4f8"/>
<circle cx="45.7" cy="74" r="2.3" fill="#3a70c8"/>
<rect x="43.8" y="67.5" width="3.8" height="3" rx="1" fill="#6a6a88"/>
<rect x="44.4" y="78.5" width="2.6" height="10.5" fill="#1a1a20"/>
<path d="M41 81 Q46 79 50 82 L49 86 Q45 86 41 85 Z" fill="#e8c0aa"/>
</g>
</svg></div>
<div class="ph" id="p9" style="left:183px;top:419px;width:101px;height:139px;background:#70a8c0"><svg viewBox="0 0 101 139" preserveAspectRatio="none">
<defs>
<filter id="bl9" x="-10%" y="-10%" width="120%" height="120%"><feGaussianBlur stdDeviation="0.7"/></filter>
<linearGradient id="dr9" x1="0" y1="0" x2="1" y2="0"><stop offset="0" stop-color="#3aa8cc"/><stop offset="0.5" stop-color="#5cc4e2"/><stop offset="1" stop-color="#3aa4c8"/></linearGradient>
</defs>
<rect width="101" height="139" fill="#b8c8d8"/>
<g filter="url(#bl9)">
<rect x="0" y="11" width="58" height="12" fill="#e6b88a"/>
<rect x="0" y="20" width="58" height="22" fill="#3aa0c0"/>
<path d="M22 20 Q32 14 42 22 L58 20 V40 H32 Z" fill="#5ab4c8"/>
<rect x="57" y="11" width="17" height="55" fill="#e4e6e6"/>
<rect x="74" y="0" width="16" height="139" fill="#685848"/>
<rect x="90" y="0" width="11" height="100" fill="#a8bccc"/>
<rect x="94" y="0" width="7" height="100" fill="#5a4a3c"/>
<rect x="0" y="1" width="101" height="11" fill="#6a5c52"/>
<path d="M0 0 H49 Q50 8 42 9 Q34 6 26 9 H4 Q0 9 0 5 Z" fill="#e6eef6"/>
<path d="M32 0 H43 Q41 4 37 3 Z" fill="#3a90d0"/>
<rect x="10" y="7" width="2.5" height="33" fill="#6a5a8a"/>
<path d="M64 2 Q68 20 66 40 M78 5 Q74 25 80 45 M68 10 l4 2 M65 25 l4 2 M70 35 l4 1" stroke="#4a7a42" stroke-width="1.1" fill="none" opacity="0.75"/>
<path d="M0 42 Q20 33 39 42 Q40 62 38 82 Q35 94 21 95 H0 Z" fill="#dcdcf0"/><path d="M0 86 Q19 94 38 84 L38 95 H0 Z" fill="#c4c4e0"/>
<path d="M24 40 L30 31 L33 42 Z" fill="#e8e8f6"/>
<path d="M0 38 Q4 36 5 45 L0 47 Z" fill="#d89aa8"/>
<ellipse cx="7" cy="60" rx="4.8" ry="5.3" fill="#3a6ac0"/><ellipse cx="7" cy="60" rx="2.5" ry="3.2" fill="#223060"/><circle cx="8.2" cy="58.3" r="0.9" fill="#fff"/>
<ellipse cx="32" cy="60" rx="4.8" ry="5.3" fill="#3a6ac0"/><ellipse cx="32" cy="60" rx="2.5" ry="3.2" fill="#223060"/><circle cx="33.2" cy="58.3" r="0.9" fill="#fff"/>
<path d="M2 51 Q8 48 14 51 M27 51 Q33 48 39 51" stroke="#7878a8" stroke-width="1.2" fill="none"/>
<ellipse cx="19" cy="66.5" rx="3.7" ry="2.3" fill="#d87a98"/>
<path d="M10.5 73 Q19 72 27.5 73 Q25.5 79 19 79.5 Q12.5 79 10.5 73 Z" fill="#9a4058"/><path d="M13 76.5 Q19 74.5 25 76.5 Q22.5 79 19 79 Q15.5 79 13 76.5 Z" fill="#d88898"/>
<rect x="0" y="78" width="10.5" height="36" fill="#f0f0f0"/>
<rect x="0" y="103" width="10.5" height="8" fill="#e0b8a0"/>
<rect x="8.5" y="102" width="3" height="8" fill="#2a50a0"/>
<rect x="10" y="95" width="24" height="8.5" fill="#e6b472"/>
<path d="M2.5 103 H33 V139 H2.5 Z" fill="#5a70b8"/>
<path d="M12 96 L23 103 L28 96 Z" fill="#5a70b8"/>
<circle cx="27" cy="107" r="1.4" fill="#dde"/>
<path d="M72 72 Q88 68 96 76 Q98 88 88 88 L72 86 Z" fill="#d4d4ea"/>
<rect x="72" y="96" width="29" height="9" fill="#a88068"/>
<rect x="73" y="105" width="28" height="34" fill="#1c3a1c"/>
<circle cx="81" cy="114" r="4" fill="#2e5228"/><circle cx="92" cy="123" r="5" fill="#2e5228"/><circle cx="79" cy="131" r="4" fill="#10240f"/>
<path d="M40.4 58 Q39 45 39.5 37 Q40.5 28 45 25.5 Q50.7 23.5 56 25 Q61 28 63 35 Q64.5 46 66.5 53 L70 58 Z" fill="#16121a"/>
<path d="M38 29 Q41 25.5 45 25.5 L43 31 Z" fill="#16121a"/>
<rect x="47" y="45" width="9.5" height="14" fill="#e6c2ae"/>
<ellipse cx="51.5" cy="38.8" rx="8" ry="9.1" fill="#f0d2c2"/>
<path d="M44 31 Q51 26.5 60 32 L60 29 Q52 24.5 44 28 Z" fill="#16121a"/>
<path d="M28.7 68 Q29.5 59 38 58.5 H64 Q80 59 81.9 68 L83 92 Q82.5 96 78 96.5 L66 97 L55 96.5 L54 91 L66 89.5 L75.5 88 L73 75 H38 L37 80 Q37 90 38 95 Q33 97 30 95 Q27 93 27.4 90 Z" fill="#e8c4ae"/>
<path d="M34 73.8 Q44 76 55 75 Q66 76 75.4 73.8 L74 84 Q73.5 90 72.8 94.5 Q74.5 102 74.5 110 L74 139 H32.6 L33.5 110 Q34 102 37.8 94.5 Q36 88 35.5 84 Z" fill="url(#dr9)"/>
<path d="M38 74 V59 M72.5 74 V59" stroke="#4cb8da" stroke-width="1.1"/>
<path d="M55 90 Q60 88 66 89.5 L66 96.5 Q60 97 55 96 Z" fill="#e4bca6"/>
<path d="M35 66 Q35.5 61 44 60.8 Q52.5 61 53 66 Z" fill="#e8e4d2"/>
<rect x="36" y="66" width="16" height="18" rx="3" fill="#cfc8b8"/>
<path d="M39.5 67 V83 M44 67 V83 M48.5 67 V83" stroke="#8a7a70" stroke-width="1"/>
<path d="M34 84 H53.3 L52.5 89.3 H35 Z" fill="#ebe7d6"/>
<path d="M37 72 Q33 76 35 82 L38 80 Z" fill="#e8c0aa"/>
</g>
</svg></div>
<div class="ph" id="p10" style="left:490px;top:421px;width:102px;height:136px;background:#d6d6d4"><svg viewBox="0 0 103 137" preserveAspectRatio="none">
<defs>
<linearGradient id="w10" x1="0" y1="0" x2="1" y2="0.3"><stop offset="0" stop-color="#d6d6d4"/><stop offset="0.6" stop-color="#dddddb"/><stop offset="1" stop-color="#e2e2e0"/></linearGradient>
<linearGradient id="t10" x1="0" y1="0" x2="0" y2="1"><stop offset="0" stop-color="#dedede"/><stop offset="1" stop-color="#d8d8d6"/></linearGradient>
<linearGradient id="gl10" x1="0" y1="0" x2="1" y2="0"><stop offset="0" stop-color="#7a6458"/><stop offset="0.12" stop-color="#c4bcb6"/><stop offset="0.25" stop-color="#8a7266"/><stop offset="0.4" stop-color="#cfc9c4"/><stop offset="0.6" stop-color="#d4cec8"/><stop offset="0.75" stop-color="#8a7266"/><stop offset="0.88" stop-color="#c4bcb6"/><stop offset="1" stop-color="#7a6458"/></linearGradient>
<filter id="bl10" x="-5%" y="-5%" width="110%" height="110%"><feGaussianBlur stdDeviation="0.5"/></filter>
</defs>
<rect width="103" height="137" fill="url(#w10)"/>
<rect y="72.7" width="103" height="43" fill="url(#t10)"/>
<path d="M0 72.7 H103" stroke="#c4c4c2" stroke-width="0.8"/>
<g filter="url(#bl10)">
<path d="M0 110 Q18 100 34 93 Q44 89 58 86 M8 104 Q24 98 36 90" fill="none" stroke="#b0aeb0" stroke-width="2.2" opacity="0.35"/><path d="M2 112 Q20 100 34 92 Q44 88 58 86 M60 108 Q75 105 92 103 M80 78 Q90 75 103 74" fill="none" stroke="#a8a6a8" stroke-width="0.6"/>
<rect y="114.3" width="103" height="2" fill="#e6e6e4"/>
<rect y="116.3" width="103" height="21" fill="#bab7b2"/>
<path d="M38 39 Q37 31 38.5 26 Q42 23 47 23.5 Q49 20 51 20 Q53 20 56 23.5 Q62 23 65 25.8 Q66.5 31 65.5 39" fill="none" stroke="#8d7e72" stroke-width="1.1"/>
<path d="M36 45 Q37 34 52 33 Q68 34 69 45 Z" fill="#ebe9dc"/>
<ellipse cx="52" cy="34" rx="5" ry="1.2" fill="#9c8f80"/>
<rect x="38.2" y="45" width="27" height="24.5" rx="4" fill="url(#gl10)"/>
<path d="M47 48 V60 M53 48 V58" stroke="#e8a040" stroke-width="1"/>
<path d="M40 69 Q52 75 64 69 L63 73 Q52 76 41 73 Z" fill="#8a6658"/>
<circle cx="51" cy="72" r="1.5" fill="#a04a30"/>
<path d="M40 73.5 H64 Q67 80 68 84.5 Q52 87 37 84.5 Q38 79 40 73.5 Z" fill="#eae8dc"/>
<rect x="45.6" y="80.5" width="13" height="2.6" fill="#222"/>
</g>
</svg></div>
<div class="ph" id="p11" style="left:610px;top:421px;width:93px;height:138px;background:#151a22"><svg viewBox="0 0 93 137" preserveAspectRatio="none">
<defs>
<linearGradient id="sk11" x1="0" y1="0" x2="0" y2="1"><stop offset="0" stop-color="#8ea2c0"/><stop offset="0.35" stop-color="#aab2c8"/><stop offset="0.65" stop-color="#d4b2b2"/><stop offset="1" stop-color="#e2a898"/></linearGradient>
<radialGradient id="lt11"><stop offset="0" stop-color="#fff6c0"/><stop offset="0.35" stop-color="#e8c860" stop-opacity="0.7"/><stop offset="1" stop-color="#806020" stop-opacity="0"/></radialGradient>
<filter id="bl11" x="-10%" y="-10%" width="120%" height="120%"><feGaussianBlur stdDeviation="0.45"/></filter>
<filter id="bb11" x="-20%" y="-50%" width="140%" height="200%"><feGaussianBlur stdDeviation="0.9"/></filter>
</defs>
<g id="sil">
<rect width="93" height="137" fill="#0c0e12"/>
<rect x="12" y="24" width="81" height="46" fill="url(#sk11)"/>
<g filter="url(#bb11)" fill="#4a5a80">
<ellipse cx="23" cy="37" rx="7" ry="2"/><ellipse cx="41" cy="39" rx="6" ry="1.8"/><ellipse cx="52" cy="46" rx="4" ry="2"/>
<ellipse cx="66" cy="45.5" rx="7" ry="2.2"/><ellipse cx="84" cy="44" rx="8" ry="4"/><ellipse cx="88" cy="52" rx="6" ry="4"/>
<path d="M12 53 Q22 50 34 53 Q46 55 56 54 L56 60 Q35 61 12 62 Z"/>
<path d="M60 54 Q75 52 93 55 V60 Q75 58 60 59 Z" opacity="0.8"/>
</g>
<g filter="url(#bl11)">
<path d="M12 60 Q28 59 40 65 Q50 69 58 71 Q72 70 93 69 V95 H12 Z" fill="#23365a"/>
<path d="M56 66 Q72 62 93 65 V72 Q72 70 56 71 Z" fill="#d8a8a0" opacity="0.6"/>
<path d="M50 71 Q70 67 93 70 V76 Q70 74 50 75 Z" fill="#34466a"/>
<path d="M12 82 Q30 78 48 83 L68 82 L68 137 H12 Z" fill="#0e131a"/>
<path d="M64 80 Q70 72 80 72 Q90 72 93 76 V137 H64 Z" fill="#0c1015"/>
<path d="M22 90 Q28 82 34 80 M28 84 Q22 80 16 83 M32 81 Q38 78 44 82 M30 82 Q34 86 36 95" stroke="#18202a" stroke-width="1.1" fill="none"/>
<path d="M0 0 H93 V52 L90.7 50.1 L72.8 26.9 L13.1 34.6 V137 H0 Z" fill="#0c0e12"/>
<path d="M2 36 H13 V137 H2 Z" fill="#121418"/>
<path d="M4 40 V130 M10 40 V130" stroke="#1a1d22" stroke-width="0.8"/>
<path d="M13.5 117 L50 116 L53 131 L13.5 131 Z" fill="#3a4656"/>
<path d="M15 120 H49 M15 124 H50 M15 128 H51" stroke="#56667c" stroke-width="0.9"/>
<path d="M0 131 H93 V137 H0 Z" fill="#0a0c10"/>
<path d="M42 118 L50 120 L54 132 L44 132 Z" fill="#0e1218"/>
<circle cx="61.2" cy="51.5" r="4.2" fill="#0f1015"/>
<path d="M57.5 50 Q60 46.5 64 48 Q66.5 51 66.8 58 Q67.5 64 69 70 L64 70 Q62 62 58 56 Z" fill="#0f1015"/>
<path d="M56 58 Q58 56 62 56.5 Q67 58 67.5 66 Q67 78 68 93 H51 Q52 80 53.5 70 Q54 62 56 58 Z" fill="#0f1015"/>
<path d="M46 108 Q46.5 100 50 93 H67.5 Q69.5 100 69 108 Z" fill="#3e3c36"/>
<path d="M50 108 L49 117 M65 108 L66 117" stroke="#0f1015" stroke-width="2.5"/>
<path d="M52 62 L45.5 52 L43 52.5" stroke="#1a1810" stroke-width="1.5" fill="none"/>
<path d="M46.5 54 L50.5 61" stroke="#7a5a28" stroke-width="0.8"/>
</g>
<circle cx="40.6" cy="59" r="5" fill="url(#lt11)"/>
<rect x="38.8" y="56.3" width="3.6" height="5.4" fill="#f8eaa8"/>
<path d="M38.3 55.8 H42.9 M38.3 62.4 H42.9" stroke="#2a2410" stroke-width="0.9"/>
</g>
</svg></div>
<div class="ph" id="p12" style="left:724px;top:421px;width:145px;height:138px;background:#151a22"><svg viewBox="0 0 144 137" preserveAspectRatio="none">
<defs>
<clipPath id="ca12"><rect x="0" y="0" width="52" height="137"/></clipPath>
<clipPath id="cc12"><rect x="91.8" y="0" width="53" height="137"/></clipPath>
<linearGradient id="sk12" x1="0" y1="0" x2="0" y2="1"><stop offset="0" stop-color="#8ea2c0"/><stop offset="0.35" stop-color="#aab2c8"/><stop offset="0.65" stop-color="#d4b2b2"/><stop offset="1" stop-color="#e2a898"/></linearGradient>
<filter id="bl12" x="-10%" y="-10%" width="120%" height="120%"><feGaussianBlur stdDeviation="0.45"/></filter>
<filter id="bb12" x="-20%" y="-20%" width="140%" height="140%"><feGaussianBlur stdDeviation="1.2"/></filter>
</defs>
<g clip-path="url(#ca12)"><use href="#sil"/></g>
<g>
<rect x="52" y="0" width="40" height="137" fill="#0c0e12"/>
<rect x="60" y="28" width="32" height="40" fill="url(#sk12)"/>
<g filter="url(#bb12)" fill="#46587e"><ellipse cx="75" cy="36.5" rx="8" ry="3"/></g>
<g filter="url(#bl12)">
<path d="M60 76 L64 73 Q72 59 78.5 53 Q85 59 92 70 V80 H60 Z" fill="#2a3c5c"/><path d="M60 74 Q76 73 92 72 V80 H60 Z" fill="#26364f"/>
<path d="M60 77 Q75 75 92 77 V137 H60 Z" fill="#0d120f"/>
<path d="M52 0 H92 V30.2 L52 34.6 Z" fill="#0d0f13"/>

<rect x="52.5" y="30" width="11.5" height="107" fill="#121418"/>
<path d="M64 118 L92 118.5 L92 130 L64 130 Z" fill="#3e4a5a"/>
<path d="M66 121.5 H92 M66 125.5 H92" stroke="#5a6a7c" stroke-width="0.9"/>
<path d="M52 130 H92 V137 H52 Z" fill="#0a0c10"/>
</g>
<circle cx="80" cy="80.6" r="0.8" fill="#c8d0a0"/>
</g>
<g clip-path="url(#cc12)"><g transform="translate(51 0)"><use href="#sil"/></g></g>
<rect x="51.6" y="0" width="1" height="137" fill="#2aa8ec"/>
<rect x="91.7" y="0" width="1" height="137" fill="#2aa8ec"/>
</svg></div>

<!-- selection frame -->
<div class="sel-line" style="left:69px;top:61px;width:800px;height:1px"></div>
<div class="sel-line" style="left:69px;top:559px;width:800px;height:1px"></div>
<div class="sel-line" style="left:69px;top:61px;width:1px;height:499px"></div>
<div class="sel-line" style="left:868px;top:61px;width:1px;height:499px"></div>
<div class="handle" style="left:65.5px;top:57.5px"></div>
<div class="handle" style="left:863.9px;top:57.2px"></div>
<div class="handle" style="left:65.5px;top:555.5px"></div>
<div class="handle" style="left:864.2px;top:555.3px"></div>

<!-- toolbar -->
<div class="abs" id="toolbar">
  <svg class="abs" style="left:11px;top:13px" width="13" height="13" viewBox="0 0 13 13">
    <rect x="1" y="0.9" width="10.9" height="11" fill="none" stroke="#a9adb4" stroke-width="1.1"/>
    <circle cx="1" cy="0.9" r="1.15" fill="#4a5160"/><circle cx="11.9" cy="0.9" r="1.15" fill="#4a5160"/>
    <circle cx="1" cy="11.9" r="1.15" fill="#4a5160"/><circle cx="11.9" cy="11.9" r="1.15" fill="#4a5160"/>
    <rect x="3.7" y="3.6" width="3.6" height="2.6" rx="0.9" fill="#fff" stroke="#4a5160" stroke-width="1.1"/>
    <rect x="5.6" y="6.5" width="3.8" height="2.7" rx="0.9" fill="#fff" stroke="#4a5160" stroke-width="1.1"/>
  </svg>
  <div class="t" style="left:32px;top:13.1px">Group</div>
  <svg class="abs" style="left:76px;top:13px" width="13" height="13" viewBox="0 0 13 13">
    <rect x="3.6" y="3.6" width="8.6" height="8.6" rx="1.8" fill="#fff" stroke="#6c7280" stroke-width="1.1"/>
    <rect x="0.6" y="0.6" width="8.6" height="8.6" rx="1.8" fill="#fff" stroke="#4a5160" stroke-width="1.1"/>
  </svg>
  <div class="t" style="left:96.6px;top:13.1px">Merge</div>
  <div class="sep" style="left:136.5px;top:9px;height:20px"></div>
  <svg class="abs" style="left:150.6px;top:12.8px" width="14" height="13" viewBox="0 0 14 13">
    <g fill="#3d4452">
      <rect x="0" y="0" width="2.7" height="2.6"/><rect x="0" y="5.2" width="2.7" height="2.6"/><rect x="0" y="10.4" width="2.7" height="2.6"/>
      <rect x="2.7" y="2.6" width="2.7" height="2.6" opacity="0.8"/><rect x="2.7" y="7.8" width="2.7" height="2.6" opacity="0.8"/>
      <rect x="5.4" y="0" width="2.7" height="2.6" opacity="0.55"/><rect x="5.4" y="5.2" width="2.7" height="2.6" opacity="0.55"/><rect x="5.4" y="10.4" width="2.7" height="2.6" opacity="0.55"/>
      <rect x="8.1" y="2.6" width="2.7" height="2.6" opacity="0.3"/><rect x="8.1" y="7.8" width="2.7" height="2.6" opacity="0.3"/>
      <rect x="10.8" y="0" width="2.7" height="2.6" opacity="0.15"/><rect x="10.8" y="5.2" width="2.7" height="2.6" opacity="0.15"/><rect x="10.8" y="10.4" width="2.7" height="2.6" opacity="0.15"/>
    </g>
  </svg>
  <svg class="abs" style="left:184.5px;top:12.8px" width="13" height="13" viewBox="0 0 13 13">
    <rect x="2.6" y="2.6" width="10.2" height="10.2" rx="1.4" fill="#c3c7ce"/>
    <rect x="0.85" y="0.85" width="9.9" height="9.9" rx="1.4" fill="#fff" stroke="#3d4452" stroke-width="1.3"/>
  </svg>
  <svg class="abs" style="left:218px;top:12.8px" width="13" height="13" viewBox="0 0 13 13">
    <rect x="0.75" y="0.75" width="11.5" height="11.5" rx="1.8" fill="#fff" stroke="#3d4452" stroke-width="1.3"/>
    <g fill="#3d4452"><circle cx="3.6" cy="3.5" r="0.6" opacity="1"/><circle cx="5.5" cy="3.5" r="0.6" opacity="0.45"/><circle cx="7.5" cy="3.5" r="0.6" opacity="0.45"/><circle cx="9.4" cy="3.5" r="0.6" opacity="0.25"/><circle cx="3.6" cy="5.4" r="0.6" opacity="1"/><circle cx="5.5" cy="5.4" r="0.75" opacity="1"/><circle cx="7.5" cy="5.4" r="0.75" opacity="0.9"/><circle cx="9.4" cy="5.4" r="0.6" opacity="0.3"/><circle cx="3.6" cy="7.6" r="0.6" opacity="1"/><circle cx="5.5" cy="7.6" r="0.75" opacity="1"/><circle cx="7.5" cy="7.6" r="0.75" opacity="0.9"/><circle cx="9.4" cy="7.6" r="0.6" opacity="0.3"/><circle cx="3.6" cy="9.5" r="0.6" opacity="1"/><circle cx="5.5" cy="9.5" r="0.6" opacity="0.8"/><circle cx="7.5" cy="9.5" r="0.6" opacity="0.45"/><circle cx="9.4" cy="9.5" r="0.6" opacity="0.25"/><path d="M9.4 5.4 H11 M9.4 7.6 H11" stroke="#3d4452" stroke-width="0.8" opacity="0.3"/></g>
  </svg>
  <svg class="abs" style="left:252px;top:12.8px" width="13" height="13" viewBox="0 0 13 13">
    <circle cx="6.5" cy="6.5" r="5.7" fill="#fff" stroke="#3d4452" stroke-width="1.4"/>
    <path d="M4.3 9.5 A3.8 3.8 0 0 0 9.7 4.1 Z" fill="#3d4452"/>
  </svg>
  <div class="sep" style="left:278.5px;top:9px;height:20px"></div>
  <svg class="abs" style="left:293px;top:13px" width="13" height="13" viewBox="0 0 13 13">
    <rect x="0.7" y="0.7" width="11.4" height="11.4" rx="1.8" fill="none" stroke="#c6c9cf" stroke-width="1.3"/>
    <path d="M1 5.6 L5.6 1 M1.6 11.2 L11.4 1.5 M6.2 6.5 L11.4 11.3" fill="none" stroke="#c6c9cf" stroke-width="1.1"/>
  </svg>
  <div class="sep" style="left:319px;top:9px;height:20px"></div>
  <svg class="abs" style="left:331px;top:13px" width="13" height="13" viewBox="0 0 13 13">
    <path d="M0.8 0.6 V12.4" stroke="#4a5160" stroke-width="1.3"/>
    <rect x="3" y="1.2" width="9" height="3.8" rx="1.9" fill="none" stroke="#4a5160" stroke-width="1.2"/>
    <rect x="3" y="7.1" width="5.4" height="3.8" rx="1.9" fill="none" stroke="#4a5160" stroke-width="1.2"/>
  </svg>
  <svg class="abs" style="left:350px;top:17.5px" width="7" height="5" viewBox="0 0 7 5">
    <path d="M0.8 1 L3.3 3.5 L5.8 1" fill="none" stroke="#333" stroke-width="1.2"/>
  </svg>
  <div class="abs" style="left:369px;top:6px;width:35px;height:26.5px;background:#eef0f3;border-radius:8px"></div>
  <svg class="abs" style="left:374px;top:13px" width="12" height="13" viewBox="0 0 12 13">
    <path d="M0.9 0.6 V12.4 M10.6 0.6 V12.4" stroke="#4a5160" stroke-width="1.3"/>
    <rect x="3.4" y="1.4" width="4.4" height="10.3" rx="1.4" fill="none" stroke="#4a5160" stroke-width="1.2"/>
  </svg>
  <svg class="abs" style="left:392.8px;top:17px" width="7" height="5" viewBox="0 0 7 5">
    <path d="M0.8 3.8 L3.3 1.3 L5.8 3.8" fill="none" stroke="#333" stroke-width="1.2"/>
  </svg>
</div>

<!-- export -->
<div class="abs" id="export">
  <svg class="abs" style="left:10px;top:9.5px" width="13" height="13" viewBox="0 0 13 13">
    <path d="M6.5 0.8 V8.2 M3.3 5.2 L6.5 8.4 L9.7 5.2 M1 8 V11.2 Q1 12 1.8 12 H11.2 Q12 12 12 11.2 V8" fill="none" stroke="#4a5160" stroke-width="1.3" stroke-linecap="round" stroke-linejoin="round"/>
  </svg>
  <div class="sep" style="left:33px;top:8px;height:16px"></div>
  <div class="t" style="left:44px;top:9.7px;color:#5d6371;font-size:10.8px">Export</div>
</div>

<!-- menu -->
<div class="abs" id="menu">
  <svg class="abs" style="left:11px;top:9.5px" width="13" height="13" viewBox="0 0 13 13">
    <path d="M1.5 0.7 V12.4 M11.4 0.7 V12.4" stroke="#303338" stroke-width="1.2"/>
    <rect x="4.1" y="1.8" width="4.6" height="9.8" rx="1.2" fill="none" stroke="#303338" stroke-width="1.2"/>
  </svg>
  <div class="mi" style="left:32px;top:10px">Horizontal Space</div>
  <svg class="abs" style="left:11px;top:39.5px" width="13" height="13" viewBox="0 0 13 13">
    <path d="M0.6 2 H12.6 M0.6 11.9 H12.6" stroke="#303338" stroke-width="1.2"/>
    <rect x="1.7" y="5.1" width="9.6" height="3.6" rx="1.2" fill="none" stroke="#303338" stroke-width="1.2"/>
  </svg>
  <div class="mi" style="left:32px;top:40px">Vertical Space</div>
  <svg class="abs" style="left:11px;top:70px" width="13" height="13" viewBox="0 0 13 13">
    <g fill="none" stroke="#303338" stroke-width="1.25">
    <rect x="0.9" y="1.3" width="4.6" height="5.6" rx="1.1"/>
    <rect x="7.9" y="1.4" width="4.6" height="3.2" rx="1.1"/>
    <rect x="0.9" y="9.6" width="4.6" height="3.2" rx="1.1"/>
    <rect x="7.9" y="6.9" width="4.6" height="5.9" rx="1.1"/>
    </g>
  </svg>
  <div class="mi" style="left:32px;top:70px">Auto Arrange</div>
  <svg class="abs" style="left:135.5px;top:11.3px" width="9" height="9" viewBox="0 0 9 9">
    <path d="M4.5 0.7 L8.2 4.4 H6.1 V8.3 H2.9 V4.4 H0.8 Z" fill="none" stroke="#cfd1d5" stroke-width="0.9" stroke-linejoin="round"/>
  </svg>
  <div class="sc" style="left:148.8px;top:10.4px">H</div>
  <svg class="abs" style="left:135.5px;top:41.3px" width="9" height="9" viewBox="0 0 9 9">
    <path d="M4.5 0.7 L8.2 4.4 H6.1 V8.3 H2.9 V4.4 H0.8 Z" fill="none" stroke="#cfd1d5" stroke-width="0.9" stroke-linejoin="round"/>
  </svg>
  <div class="sc" style="left:148.8px;top:40.4px">V</div>
  <svg class="abs" style="left:135.5px;top:71.3px" width="9" height="9" viewBox="0 0 9 9">
    <path d="M4.5 0.7 L8.2 4.4 H6.1 V8.3 H2.9 V4.4 H0.8 Z" fill="none" stroke="#cfd1d5" stroke-width="0.9" stroke-linejoin="round"/>
  </svg>
  <div class="sc" style="left:148.8px;top:70.4px">A</div>
</div>

</body></html>
